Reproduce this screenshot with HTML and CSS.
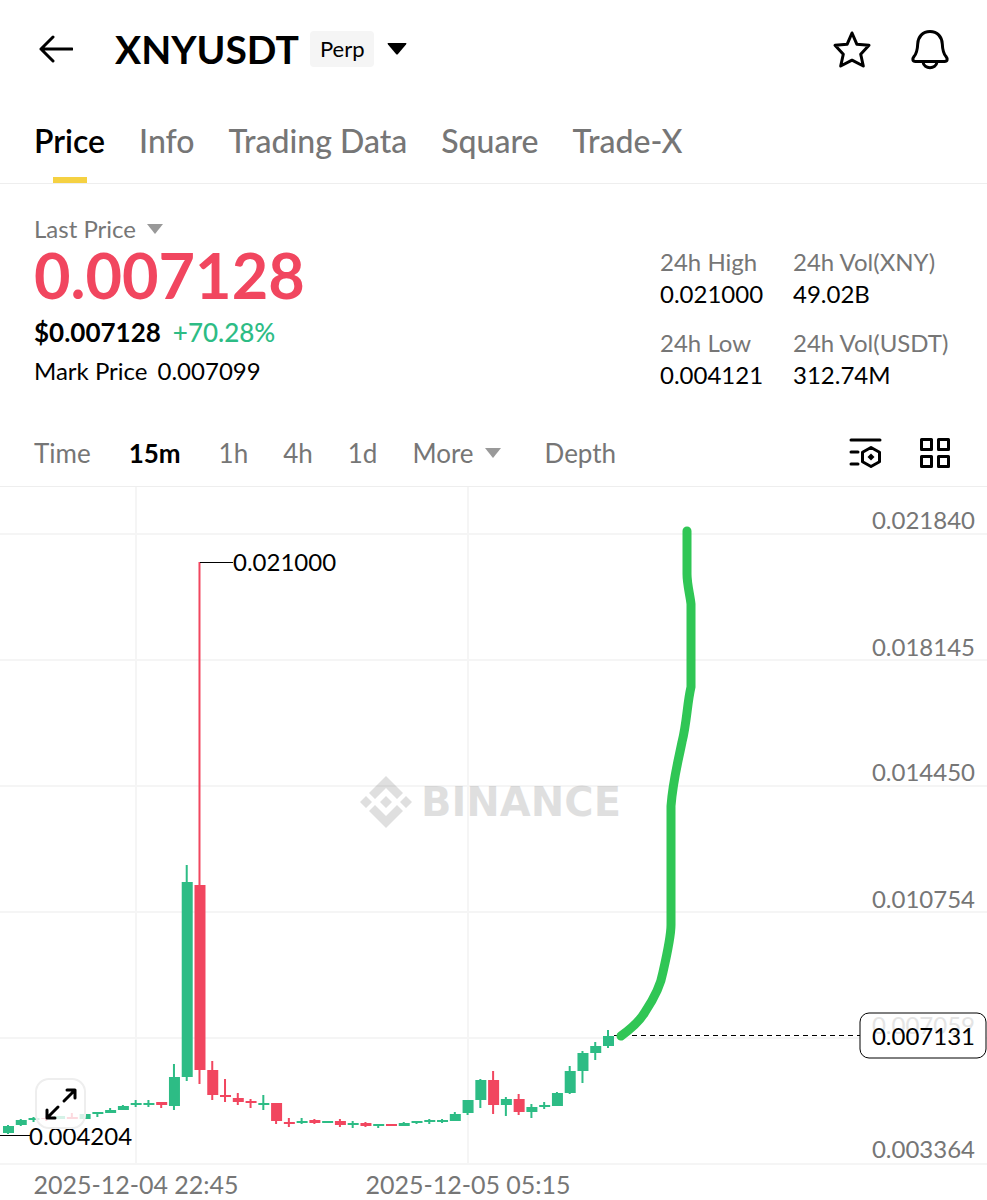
FILE: index.html
```
<!DOCTYPE html>
<html lang="en">
<head>
    <meta charset="utf-8">
    <meta name="viewport" content="width=device-width, initial-scale=1">
    <title>XNYUSDT Perp</title>
    <link rel="stylesheet" href="styles.css">
</head>
<body>

    <header class="topBar">
        <button type="button" class="back" aria-label="Back">
            <svg width="36" height="30" viewBox="0 0 36 30"><path d="M16 3 4 15l12 12M4 15h31" class="line"/></svg>
        </button>
        <h1>XNYUSDT</h1>
        <span class="badge">Perp</span>
        <button type="button" class="pick" aria-label="Change pair">
            <svg width="22" height="14" viewBox="0 0 22 14"><path d="M2 1h18q1 0 0 1.500l-8 9.500q-1 1-2 0L2 2.500Q1 1 2 1z"/></svg>
        </button>
        <div class="actions">
            <button type="button" aria-label="Favorite">
                <svg width="40" height="40" viewBox="0 0 40 40"><path d="M20 4l4.800 11.200 12.200 1.100-8.300 8.900 2.600 11.800L20 31.200 8.700 37l2.600-11.800L3 16.300l12.200-1.100z" class="line"/></svg>
            </button>
            <button type="button" aria-label="Alerts">
                <svg width="40" height="42" viewBox="0 0 40 42"><path d="M20 3.500c-7.500 0-12 5.500-12.300 12.500-.3 7-1 9.500-3.700 12.500-2 2.500-1.500 5 1.500 5h29c3 0 3.500-2.500 1.500-5-2.700-3-3.400-5.500-3.700-12.500C32 9 27.500 3.500 20 3.500zM13 34c1 7.500 13 7.500 14 0" class="line"/></svg>
            </button>
        </div>
    </header>

    <nav class="tabs">
        <a href="#price" class="active">Price</a>
        <a href="#info">Info</a>
        <a href="#data">Trading Data</a>
        <a href="#square">Square</a>
        <a href="#tradex">Trade-X</a>
    </nav>

    <section class="ticker">
        <div class="price">
            <button type="button" class="priceType">Last Price
                <svg width="18" height="12" viewBox="0 0 18 12"><path d="M1 1h16L9 11z"/></svg>
            </button>
            <div class="last">0.007128</div>
            <div class="change"><span>$0.007128</span> <span class="up">+70.28%</span></div>
            <div class="mark"><span>Mark Price</span> <span>0.007099</span></div>
        </div>
        <dl class="stats">
            <div><dt>24h High</dt><dd>0.021000</dd></div>
            <div><dt>24h Vol(XNY)</dt><dd>49.02B</dd></div>
            <div><dt>24h Low</dt><dd>0.004121</dd></div>
            <div><dt>24h Vol(USDT)</dt><dd>312.74M</dd></div>
        </dl>
    </section>

    <div class="intervals">
        <button type="button">Time</button>
        <button type="button" class="active">15m</button>
        <button type="button">1h</button>
        <button type="button">4h</button>
        <button type="button">1d</button>
        <button type="button" class="more">More
            <svg width="18" height="12" viewBox="0 0 18 12"><path d="M1 1h16L9 11z"/></svg>
        </button>
        <button type="button">Depth</button>
        <div class="tools">
            <button type="button" aria-label="Indicators">
                <svg width="34" height="32" viewBox="0 0 34 32"><path d="M2 3h29M2 15h7M2 27h7M22 10.500l8.500 4.700v9.600L22 29.500l-8.500-4.700v-9.600z" class="line"/><path d="M22 16.500l3.500 3.500-3.500 3.500-3.500-3.500z"/></svg>
            </button>
            <button type="button" aria-label="Layout">
                <svg width="32" height="32" viewBox="0 0 32 32"><path d="M2.500 2.500h10v10h-10zM19.500 2.500h10v10h-10zM2.500 19.500h10v10h-10zM19.500 19.500h10v10h-10z" class="line"/></svg>
            </button>
        </div>
    </div>

    <main class="chart">
        <svg viewBox="0 487 987 713" role="img" aria-label="XNYUSDT 15 minute candles">
            <path class="grid" d="M0 534h987M0 660h987M0 786h987M0 912h987M0 1038h987M0 1164h987M136 487v677M468 487v677"/>
            <g class="watermark">
                <path d="M386 776l17 17-6 6-11-11-11 11-6-6zM386 828l-17-17 6-6 11 11 11-11 6 6zM366 796l6 6-6 6-6-6zM406 796l6 6-6 6-6-6zM386 796l6 6-6 6-6-6z"/>
                <text x="421" y="816">BINANCE</text>
            </g>
            <g class="axis">
                <text x="975" y="529">0.021840</text>
                <text x="975" y="656">0.018145</text>
                <text x="975" y="781">0.014450</text>
                <text x="975" y="908">0.010754</text>
                <text x="975" y="1158">0.003364</text>
            </g>
            <g class="dates">
                <text x="136" y="1194">2025-12-04 22:45</text>
                <text x="468" y="1194">2025-12-05 05:15</text>
            </g>
            <g id="candles"></g>
            <path class="leader" d="M200 562h33M0 1135h30"/>
            <path class="lastLine" d="M614 1035h246"/>
            <g class="mark">
                <text x="233" y="571">0.021000</text>
                <text x="29" y="1145">0.004204</text>
            </g>
            <rect class="tag" x="860" y="1013" width="126" height="45" rx="9"/>
            <text class="ghost" x="975" y="1034">0.007059</text>
            <text class="now" x="975" y="1045">0.007131</text>
            <path class="drawing" d="M621 1036C632 1028 641 1019 645 1012C655 997 661 984 663 972C668 950 671 934 671 925V806C673 780 678 762 682 742C687 722 687 704 691 687V604C690 595 687 584 687 574V531"/>
        </svg>
        <button type="button" class="expand" aria-label="Full screen">
            <svg width="34" height="34" viewBox="0 0 34 34"><path d="M20 14 31 3M23 3h8v8M14 20 3 31M3 23v8h8" class="line"/></svg>
        </button>
    </main>

    <script src="chart.js"></script>
</body>
</html>
```

FILE: styles.css
```
* {box-sizing: border-box;}
body {
    background-color: #fff;
    color: #000;
    font-family: Lato, "Open Sans", sans-serif;
    font-size: 24px;
    line-height: 32px;
    margin: 0;
}
button {
    background: none;
    border: 0;
    color: inherit;
    cursor: pointer;
    font: inherit;
    padding: 0;
}
svg {display: block;}
.line {
    fill: none;
    stroke: #000;
    stroke-linecap: round;
    stroke-linejoin: round;
    stroke-width: 3;
}

.topBar {
    align-items: center;
    display: flex;
    height: 98px;
    padding: 0 37px 0 37px;
}
.topBar h1 {
    font-size: 39px;
    font-weight: 700;
    line-height: 48px;
    margin: 0 11px 0 42px;
}
.badge {
    background-color: #f5f5f5;
    border-radius: 4px;
    font-size: 22px;
    line-height: 36px;
    padding: 0 10px;
}
.pick {margin-left: 12px;}
.actions {
    display: flex;
    gap: 38px;
    margin-left: auto;
}

.tabs {
    border-bottom: 1px solid #eee;
    display: flex;
    font-size: 32px;
    font-weight: 500;
    gap: 34px;
    height: 86px;
    line-height: 86px;
    padding: 0 34px;
}
.tabs a {
    color: #767676;
    position: relative;
    text-decoration: none;
}
.tabs .active {color: #000; font-weight: 600;}
.tabs .active::after {
    background-color: #f5d142;
    bottom: 0;
    content: "";
    height: 6px;
    left: calc(50% - 17px);
    position: absolute;
    width: 34px;
}

.ticker {
    display: flex;
    height: 236px;
    justify-content: space-between;
    padding: 31px 34px 0;
}
.priceType {
    align-items: center;
    color: #767676;
    display: flex;
    gap: 10px;
    line-height: 28px;
}
.priceType svg, .intervals button > svg {fill: #999;}
.last {
    color: #f1465f;
    font-size: 63px;
    font-weight: 700;
    line-height: 64px;
}
.change {
    display: flex;
    font-size: 26px;
    font-weight: 700;
    gap: 12px;
    line-height: 50px;
}
.up {color: #2dbc85; font-weight: 500;}
.price .mark {
    display: flex;
    gap: 10px;
    line-height: 28px;
}
.stats {
    align-content: start;
    column-gap: 28px;
    display: grid;
    grid-template-columns: 105px 160px;
    margin: 31px 0 0;
    row-gap: 17px;
}
.stats dt {color: #767676;}
.stats dd {margin: 0;}

.intervals {
    align-items: center;
    border-bottom: 1px solid #eee;
    color: #767676;
    display: flex;
    font-size: 26px;
    gap: 35px;
    height: 67px;
    padding: 0 36px 0 34px;
}
.intervals button {
    align-items: center;
    display: flex;
    gap: 10px;
}
.intervals .active {color: #000; font-weight: 700; margin: 0 3px;}
.intervals .more {margin-right: 8px;}
.intervals .tools {
    display: flex;
    gap: 36px;
    margin-left: auto;
}
.intervals .tools svg {fill: #000;}

.chart {position: relative;}
.chart > svg {height: auto; width: 100%;}
.chart text {font-size: 24px;}
.grid {fill: none; stroke: #f5f5f5; stroke-width: 2;}
.axis, .dates {fill: #767676;}
.axis, .ghost, .now {text-anchor: end;}
.dates {text-anchor: middle;}
.chart .dates text {font-size: 25px;}
.watermark {opacity: 0.12;}
.chart .watermark text {
    font-family: "DejaVu Sans", sans-serif;
    font-size: 40px;
    font-weight: 700;
}
.leader, .lastLine {
    fill: none;
    shape-rendering: crispEdges;
    stroke: #000;
    stroke-width: 1;
}
.lastLine {stroke-dasharray: 5 4;}
.tag {fill: #fff; stroke: #000; stroke-width: 1;}
.ghost {fill: #e4e4e4;}
.rise {fill: #2dbc85;}
.fall {fill: #f1465f;}
.drawing {
    fill: none;
    stroke: #30c655;
    stroke-linecap: round;
    stroke-linejoin: round;
    stroke-width: 9;
}
.expand {
    background-color: rgba(255, 255, 255, 0.8);
    border: 2px solid #eee;
    border-radius: 14px;
    bottom: 71px;
    height: 51px;
    left: 35px;
    padding: 7px;
    position: absolute;
    width: 51px;
}
```

FILE: chart.js
```
// direction, body top, body bottom, wick top, wick bottom
var candles = [
    ['rise', 1126, 1133, 1125, 1134],
    ['rise', 1120, 1125, 1119, 1126],
    ['rise', 1118, 1120, 1117, 1122],
    ['fall', 1118, 1119, 1116, 1121],
    ['rise', 1116, 1119, 1116, 1119],
    ['fall', 1117, 1119, 1113, 1119],
    ['rise', 1114, 1119, 1114, 1119],
    ['rise', 1112, 1114, 1112, 1117],
    ['rise', 1110, 1113, 1108, 1113],
    ['rise', 1106, 1110, 1105, 1110],
    ['rise', 1103, 1105, 1100, 1107],
    ['rise', 1103, 1105, 1100, 1107],
    ['fall', 1102, 1105, 1102, 1108],
    ['rise', 1077, 1106, 1064, 1110],
    ['rise', 882, 1077, 865, 1081],
    ['fall', 885, 1070, 562, 1084],
    ['fall', 1070, 1095, 1061, 1100],
    ['fall', 1095, 1097, 1079, 1102],
    ['fall', 1098, 1102, 1093, 1105],
    ['fall', 1101, 1103, 1099, 1108],
    ['rise', 1103, 1105, 1095, 1110],
    ['fall', 1103, 1121, 1103, 1124],
    ['fall', 1122, 1124, 1118, 1127],
    ['rise', 1121, 1123, 1118, 1124],
    ['fall', 1120, 1123, 1119, 1124],
    ['rise', 1121, 1123, 1121, 1123],
    ['fall', 1121, 1125, 1119, 1127],
    ['rise', 1123, 1125, 1121, 1128],
    ['fall', 1123, 1126, 1122, 1127],
    ['rise', 1124, 1126, 1124, 1128],
    ['fall', 1124, 1126, 1124, 1126],
    ['rise', 1123, 1126, 1122, 1126],
    ['rise', 1121, 1123, 1121, 1124],
    ['rise', 1120, 1122, 1119, 1124],
    ['rise', 1120, 1122, 1119, 1123],
    ['rise', 1114, 1121, 1112, 1121],
    ['rise', 1100, 1113, 1100, 1115],
    ['rise', 1080, 1100, 1079, 1108],
    ['fall', 1080, 1105, 1071, 1114],
    ['rise', 1099, 1105, 1097, 1116],
    ['fall', 1099, 1112, 1094, 1115],
    ['rise', 1107, 1112, 1104, 1118],
    ['rise', 1105, 1107, 1102, 1109],
    ['rise', 1093, 1106, 1092, 1106],
    ['rise', 1071, 1093, 1066, 1094],
    ['rise', 1053, 1071, 1051, 1083],
    ['rise', 1046, 1053, 1042, 1060],
    ['rise', 1036, 1046, 1030, 1048]
];

function bar(type, x, top, width, bottom) {
    var rect = document.createElementNS('http://www.w3.org/2000/svg', 'rect');
    rect.setAttribute('class', type);
    rect.setAttribute('x', x);
    rect.setAttribute('y', top);
    rect.setAttribute('width', width);
    rect.setAttribute('height', bottom - top);
    document.getElementById('candles').appendChild(rect);
}

candles.forEach(function (c, i) {
    var x = 8 + i * 600 / 47;
    bar(c[0], x - 1, c[3], 2, c[4]);
    bar(c[0], x - 5, c[1], 11, c[2]);
});
```
